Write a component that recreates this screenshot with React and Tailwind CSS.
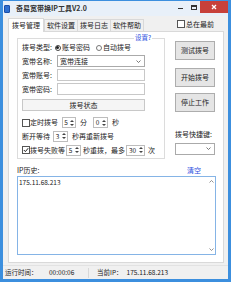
import React from "react";

const F = { fontFamily: '"Noto Sans CJK SC","Microsoft YaHei",sans-serif' };

function Spin({ v, w = "w-[16px]" }) {
  return (
    <div className={`flex shrink-0 items-center h-[11px] ${w} border border-[#bdbdbd] bg-white`}>
      <span className="flex-1 text-center leading-none text-[6.5px]">{v}</span>
      <div className="flex flex-col items-center justify-center gap-[2px] w-[5px] mr-[1px]">
        <div className="w-0 h-0 border-l-[2px] border-r-[2px] border-b-[2px] border-l-transparent border-r-transparent border-b-[#444]" />
        <div className="w-0 h-0 border-l-[2px] border-r-[2px] border-t-[2px] border-l-transparent border-r-transparent border-t-[#444]" />
      </div>
    </div>
  );
}

function Chevron() {
  return (
    <svg width="5" height="3" viewBox="0 0 5 3" className="ml-auto mr-[3px]">
      <path d="M0.5 0.5 L2.5 2.5 L4.5 0.5" fill="none" stroke="#555" strokeWidth="0.8" />
    </svg>
  );
}

function Btn({ children, cls = "" }) {
  return (
    <div className={`flex items-center justify-center border border-[#adadad] bg-[#e5e5e5] ${cls}`}>
      {children}
    </div>
  );
}

export default function App() {
  return (
    <div
      style={F}
      className="w-[231px] h-[282px] bg-[#3c8fde] flex flex-col text-[7px] text-[#222] overflow-hidden whitespace-nowrap"
    >
      {/* title bar */}
      <div className="h-[15px] mx-[3px] mt-[1px] bg-[#e8f0f9] flex items-center relative">
        <div className="w-[6px] h-[8px] bg-[#2f6fd0] ml-[1px] rounded-[1px] border border-[#1b4fa8]" />
        <span className="ml-[6px] text-[7px] font-bold text-[#333]">奇易宽带换IP工具V2.0</span>
        <div className="ml-auto flex items-start h-full">
          <div className="w-[13px] h-[13px] flex items-center justify-center">
            <div className="w-[5px] h-[1.5px] bg-[#333] mt-[2px]" />
          </div>
          <div className="w-[13px] h-[13px] flex items-center justify-center">
            <div className="w-[6px] h-[5px] border border-[#333] border-t-2" />
          </div>
          <div className="w-[28px] h-[12px] bg-[#c7403a] flex items-center justify-center">
            <svg width="6" height="6" viewBox="0 0 6 6">
              <path d="M1 1 L5 5 M5 1 L1 5" stroke="white" strokeWidth="1.3" />
            </svg>
          </div>
        </div>
      </div>

      {/* body */}
      <div className="flex-1 mx-[3px] bg-[#f0f0f0] flex flex-col">
        {/* tabs row */}
        <div className="flex items-end h-[15px] pl-[5px] pr-[4px]">
          <div className="h-[14px] px-[3px] bg-white border border-b-0 border-[#d9d9d9] flex items-center relative top-[1px]">拨号管理</div>
          <div className="h-[12px] px-[2px] border border-b-0 border-[#d9d9d9] flex items-center">软件设置</div>
          <div className="h-[12px] px-[2px] border border-b-0 border-l-0 border-[#d9d9d9] flex items-center">拨号日志</div>
          <div className="h-[12px] px-[2px] border border-b-0 border-l-0 border-[#d9d9d9] flex items-center">软件帮助</div>
          <div className="ml-auto mb-[2px] mr-[10px] flex items-center">
            <div className="w-[8px] h-[8px] border border-[#555] bg-white mr-[1px]" />
            <span>总在最前</span>
          </div>
        </div>

        {/* tab panel */}
        <div className="ml-[5px] mr-[4px] h-[232px] bg-white border border-[#d9d9d9] flex flex-col px-[8px]">
          <div className="flex mt-[6px]">
            {/* group */}
            <div className="w-[148px] h-[121px] shrink-0 border border-[#dcdcdc] relative flex flex-col pl-[4px] pt-[2px]">
              <span className="absolute right-[12px] top-[-6px] bg-white px-[1px] text-[#2d4fe0] text-[6.5px]">设置?</span>
              <div className="flex items-center h-[13px]">
                <span>拨号类型:</span>
                <div className="ml-[3px] w-[6px] h-[6px] rounded-full border border-[#444] flex items-center justify-center">
                  <div className="w-[3px] h-[3px] rounded-full bg-[#222]" />
                </div>
                <span className="ml-[1px]">账号密码</span>
                <div className="ml-[6px] w-[6px] h-[6px] rounded-full border border-[#777]" />
                <span className="ml-[1px]">自动拨号</span>
              </div>
              <div className="flex items-center h-[14px]">
                <span className="w-[35px]">宽带名称:</span>
                <div className="w-[88px] h-[12px] border border-[#aaa] bg-white flex items-center pl-[2px]">
                  <span>宽带连接</span>
                  <Chevron />
                </div>
              </div>
              <div className="flex items-center h-[14px]">
                <span className="w-[35px]">宽带账号:</span>
                <div className="w-[88px] h-[12px] border border-[#c8c8c8] bg-white" />
              </div>
              <div className="flex items-center h-[14px]">
                <span className="w-[35px]">宽带密码:</span>
                <div className="w-[88px] h-[12px] border border-[#c8c8c8] bg-white" />
              </div>
              <Btn cls="w-[123px] h-[12px] mt-[3px] bg-[#f5f5f5] border-[#c8c8c8]">拨号状态</Btn>
              <div className="flex items-center h-[13px] mt-[5px]">
                <div className="w-[8px] h-[8px] shrink-0 border border-[#555] bg-white" />
                <span>定时拨号</span>
                <div className="ml-[4px]"><Spin v="5" w="w-[14px]" /></div>
                <span className="ml-[4px]">分</span>
                <div className="ml-[6px]"><Spin v="0" w="w-[15px]" /></div>
                <span className="ml-[4px]">秒</span>
              </div>
              <div className="flex items-center h-[14px]">
                <span>断开等待</span>
                <div className="ml-[3px]"><Spin v="3" w="w-[15px]" /></div>
                <span className="ml-[4px]">秒再重新拨号</span>
              </div>
              <div className="flex items-center h-[14px]">
                <div className="w-[8px] h-[8px] shrink-0 border border-[#555] bg-white flex items-center justify-center">
                  <svg width="6" height="6" viewBox="0 0 6 6">
                    <path d="M0.8 3 L2.4 4.6 L5.2 1.2" fill="none" stroke="#222" strokeWidth="1" />
                  </svg>
                </div>
                <span>拨号失败等</span>
                <div className="ml-[1px]"><Spin v="5" w="w-[15px]" /></div>
                <span className="ml-[2px]">秒重拨，最多</span>
                <div className="ml-[1px]"><Spin v="30" w="w-[19px]" /></div>
                <span className="ml-[3px]">次</span>
              </div>
            </div>

            {/* right column */}
            <div className="flex flex-col ml-[10px] w-[43px]">
              <Btn cls="h-[19px] mt-[3px]">测试拨号</Btn>
              <Btn cls="h-[19px] mt-[8px]">开始拨号</Btn>
              <Btn cls="h-[19px] mt-[6px]">停止工作</Btn>
              <span className="mt-[17px]">拨号快捷键:</span>
              <div className="h-[12px] mt-[3px] border border-[#aaa] bg-white flex items-center">
                <Chevron />
              </div>
            </div>
          </div>

          <div className="flex items-center mt-[7px] h-[9px] w-[199px]">
            <span>IP历史:</span>
            <span className="ml-auto mr-[15px] text-[#2d4fe0]">清空</span>
          </div>
          <div className="w-[199px] h-[79px] mt-[1px] border border-[#85b4e6] bg-white flex">
            <div className="flex-1 pl-[1px] pt-[1px] text-[6.5px]">175.11.68.213</div>
            <div className="w-[8px] flex flex-col justify-between items-center py-[3px]">
              <svg width="5" height="3" viewBox="0 0 5 3">
                <path d="M0.5 2.5 L2.5 0.5 L4.5 2.5" fill="none" stroke="#777" strokeWidth="0.8" />
              </svg>
              <svg width="5" height="3" viewBox="0 0 5 3">
                <path d="M0.5 0.5 L2.5 2.5 L4.5 0.5" fill="none" stroke="#777" strokeWidth="0.8" />
              </svg>
            </div>
          </div>
        </div>

        {/* status bar */}
        <div className="flex-1 flex items-center text-[6.5px] border-t border-[#e2e2e2] mt-[2px]">
          <span className="ml-[2px] w-[44px]">运行时间：</span>
          <span className="w-[39px]">00:00:06</span>
          <div className="w-[1px] h-[10px] bg-[#d8d8d8]" />
          <span className="ml-[8px]">当前IP：</span>
          <span className="ml-[4px]">175.11.68.213</span>
        </div>
      </div>
      <div className="h-[3px]" />
    </div>
  );
}
